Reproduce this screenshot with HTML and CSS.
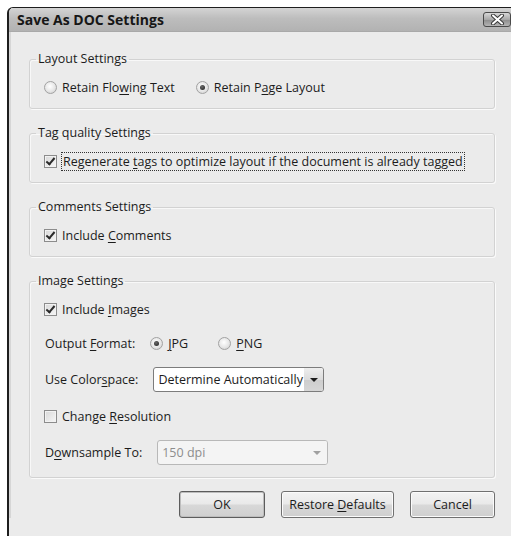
FILE: index.html
```html
<!DOCTYPE html>
<html>
<head>
<meta charset="utf-8">
<title>Save As DOC Settings</title>
<link rel="stylesheet" href="styles.css">
</head>
<body>
<div class="window">
  <div class="titlebar">
    <span class="title">Save As DOC Settings</span>
    <span class="close">
      <svg width="17" height="11" viewBox="0 0 17 11">
        <path d="M4 1.5 L13 9.5 M13 1.5 L4 9.5" stroke="#3a3a3a" stroke-width="4" stroke-linecap="round"/>
        <path d="M4 1.5 L13 9.5 M13 1.5 L4 9.5" stroke="#fff" stroke-width="2" stroke-linecap="round"/>
      </svg>
    </span>
  </div>

  <div class="content">
    <fieldset class="group">
      <legend>Layout Settings</legend>
      <div class="rows">
        <div class="row">
          <span class="option"><span class="radio"></span><span>Retain Flo<u>w</u>ing Text</span></span>
          <span class="option second"><span class="radio on"></span><span>Retain P<u>a</u>ge Layout</span></span>
        </div>
      </div>
    </fieldset>

    <fieldset class="group">
      <legend>Tag quality Settings</legend>
      <div class="rows">
        <div class="row">
          <span class="option"><span class="check on"></span><span class="focus">Regenerate <u>t</u>ags to optimize layout if the document is already tagged</span></span>
        </div>
      </div>
    </fieldset>

    <fieldset class="group">
      <legend>Comments Settings</legend>
      <div class="rows">
        <div class="row">
          <span class="option"><span class="check on"></span><span>Include <u>C</u>omments</span></span>
        </div>
      </div>
    </fieldset>

    <fieldset class="group">
      <legend>Image Settings</legend>
      <div class="rows image-rows">
        <div class="row">
          <span class="option"><span class="check on"></span><span>Include <u>I</u>mages</span></span>
        </div>
        <div class="row">
          <span class="label">Output <u>F</u>ormat:</span>
          <span class="option jpg"><span class="radio on"></span><span><u>J</u>PG</span></span>
          <span class="option png"><span class="radio"></span><span><u>P</u>NG</span></span>
        </div>
        <div class="row">
          <span class="label">Use Color<u>s</u>pace:</span>
          <span class="select">
            <span class="select-text">Determine Automatically</span>
            <span class="select-arrow"></span>
          </span>
        </div>
        <div class="row">
          <span class="option"><span class="check"></span><span>Change <u>R</u>esolution</span></span>
        </div>
        <div class="row">
          <span class="label">D<u>o</u>wnsample To:</span>
          <span class="select disabled">
            <span class="select-text">150 dpi</span>
            <span class="select-arrow"></span>
          </span>
        </div>
      </div>
    </fieldset>

    <div class="buttons">
      <button class="btn ok">OK</button>
      <button class="btn restore">Restore <u>D</u>efaults</button>
      <button class="btn cancel">Cancel</button>
    </div>
  </div>
</div>
</body>
</html>
```

FILE: styles.css
```css
html, body {
  margin: 0;
  padding: 0;
  background: #ffffff;
  overflow: hidden;
}

body {
  width: 511px;
  height: 536px;
  font-family: "Open Sans", "Noto Sans", sans-serif;
  font-size: 12.5px;
  color: #1c1c1c;
}

u {
  text-decoration-thickness: 1px;
  text-underline-offset: 2px;
}

/* dialog frame, running off the right and bottom edges */
.window {
  margin: 7px 0 0 7px;
  width: 520px;
  height: 540px;
  border-top: 1px solid #1e1e1e;
  border-left: 2px solid #1e1e1e;
  border-top-left-radius: 6px;
  background: #ebebeb;
  overflow: hidden;
}

.titlebar {
  height: 23px;
  display: flex;
  align-items: center;
  padding-left: 8px;
  background: linear-gradient(#d4d4d4, #bdbdbd 45%, #b2b2b2);
  border-bottom: 1px solid #a9a9a9;
  position: relative;
}

.title {
  font-weight: bold;
  font-size: 14px;
  color: #161616;
}

.close {
  position: absolute;
  left: 474px;
  top: 4px;
  width: 28px;
  height: 15px;
  box-sizing: border-box;
  border: 1px solid #4a4a4a;
  border-radius: 3px;
  background: linear-gradient(#d8d8d8, #a8a8a8 50%, #8c8c8c 51%, #b4b4b4);
  display: flex;
  align-items: center;
  justify-content: center;
}

.content {
  padding: 19px 0 0 20px;
  box-shadow: inset 2px 0 0 #d6d6d6;
  width: 466px;
}

.group {
  margin: 0 0 16px 0;
  padding: 0 0 11px 6px;
  border: 1px solid #d2d2d2;
  border-radius: 3px;
  box-shadow: 1px 1px 0 #fafafa, inset 1px 1px 0 #f8f8f8;
  min-width: 0;
}

.group legend {
  padding: 0 2px;
  line-height: 16px;
  color: #1c1c1c;
}

.rows {
  padding: 10px 0 0 8px;
  display: flex;
  flex-direction: column;
}

.image-rows {
  gap: 14px;
}

.group:last-of-type {
  padding-bottom: 12px;
  margin-bottom: 13px;
}

.row {
  display: flex;
  align-items: center;
  min-height: 20px;
  white-space: nowrap;
}

.option {
  display: inline-flex;
  align-items: center;
  gap: 5px;
}

.option.second {
  margin-left: 21px;
}

.label {
  margin-left: 1px;
}

.option.jpg {
  margin-left: 15px;
}

.option.png {
  margin-left: 30px;
}

/* radio button */
.radio {
  width: 11px;
  height: 11px;
  border-radius: 50%;
  border: 1px solid #a2a2a2;
  background: radial-gradient(circle at 45% 40%, #ffffff 0%, #e6e6e6 55%, #c8c8c8 100%);
  position: relative;
  flex: none;
}

.radio.on::after {
  content: "";
  position: absolute;
  left: 3px;
  top: 3px;
  width: 5px;
  height: 5px;
  border-radius: 50%;
  background: radial-gradient(circle at 40% 35%, #6a6a6a, #1e1e1e);
}

/* check box */
.check {
  width: 11px;
  height: 11px;
  border: 1px solid #8c8c8c;
  background: linear-gradient(135deg, #d8d8d8, #f6f6f6);
  box-shadow: inset 0 0 0 1px #f2f2f2;
  position: relative;
  flex: none;
}

.check.on::after {
  content: "";
  position: absolute;
  left: 3px;
  top: 0px;
  width: 3px;
  height: 7px;
  border-right: 2px solid #2a2a2a;
  border-bottom: 2px solid #2a2a2a;
  transform: rotate(40deg);
}

.focus {
  outline: 1px dotted #333;
  outline-offset: 0;
  padding: 0 1px;
  line-height: 17px;
}

/* drop-down list */
.select {
  display: flex;
  align-items: stretch;
  width: 171px;
  height: 25px;
  box-sizing: border-box;
  margin-left: 15px;
  border: 1px solid #7c7c7c;
  border-radius: 3px;
  background: #ffffff;
  overflow: hidden;
}

.select-text {
  flex: 1;
  overflow: hidden;
  padding-left: 4px;
  line-height: 23px;
  white-space: nowrap;
}

.select-arrow {
  width: 19px;
  flex: none;
  position: relative;
  background: linear-gradient(#eeeeee, #dcdcdc 50%, #cdcdcd 51%, #d6d6d6);
}

.select-arrow::after {
  content: "";
  position: absolute;
  left: 6px;
  top: 10px;
  border-left: 4px solid transparent;
  border-right: 4px solid transparent;
  border-top: 4px solid #1c1c1c;
}

.select.disabled {
  border-color: #b8b8b8;
  background: #f4f4f4;
  color: #8d8d8d;
}

.select.disabled .select-arrow {
  background: #f4f4f4;
}

.select.disabled .select-arrow::after {
  border-top-color: #a0a0a0;
  left: 5px;
}

/* bottom buttons */
.buttons {
  display: flex;
  justify-content: flex-end;
  gap: 16px;
  width: 466px;
}

.btn {
  height: 27px;
  font-family: inherit;
  font-size: 12.5px;
  color: #1c1c1c;
  border: 1px solid #707070;
  border-radius: 3px;
  background: linear-gradient(#f3f3f3, #e9e9e9 48%, #d8d8d8 52%, #cfcfcf);
  box-shadow: inset 0 0 0 1px #fbfbfb;
  padding: 0;
}

.btn.ok {
  width: 86px;
  border-color: #5c5c5c;
  box-shadow: inset 0 0 0 1px #bdbdbd;
}

.btn.restore {
  width: 113px;
}

.btn.cancel {
  width: 85px;
}
```
